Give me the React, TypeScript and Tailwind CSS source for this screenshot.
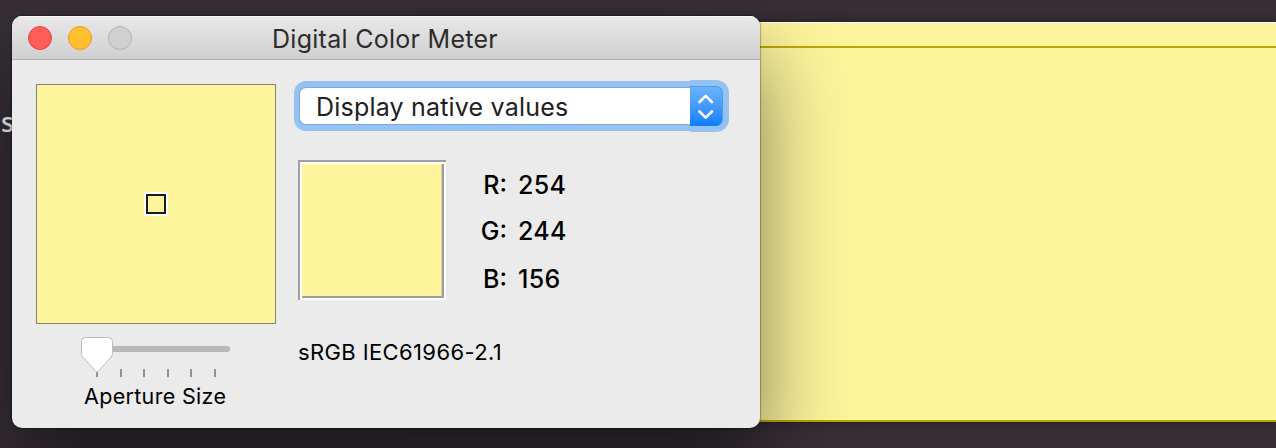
const channels = [
  { label: "R:", value: "254", row: "h-[46px]" },
  { label: "G:", value: "244", row: "h-[48px]" },
  { label: "B:", value: "156", row: "h-[46px]" },
];

function TitleBar() {
  return (
    <header className="flex h-11 shrink-0 items-center border-b border-[#b1b1b1] bg-linear-to-b from-[#e9e9e9] to-[#cfcfcf] pl-4 shadow-[inset_0_1px_0_#f6f6f6]">
      <div className="flex w-[244px] gap-4">
        <span className="size-6 rounded-full border border-[#e2463f] bg-[#ff5f58]" />
        <span className="size-6 rounded-full border border-[#dfa023] bg-[#ffbf2e]" />
        <span className="size-6 rounded-full border border-[#b4b4b4] bg-[#d0d0d0]" />
      </div>
      <h1 className="whitespace-nowrap pt-[3px] text-[25px] leading-8 font-[440] tracking-[0.28px] text-[#2c2c2c]">Digital Color Meter</h1>
    </header>
  );
}

function ApertureSlider() {
  return (
    <svg className="mt-2.5 ml-10 block" width="160" height="46" viewBox="0 0 160 46">
      <rect x="8" y="12" width="146" height="6" rx="3" fill="#b8b8b8" />
      <path d="M21 35v8M45 35v8M68 35v8M92 35v8M115 35v8M139 35v8" stroke="#929292" strokeWidth="2" />
      <path
        d="M9.500 3.500h23q4 0 4 4v12q0 2-1.400 3.600L22 37.600q-1 1-2 0L6.900 23.100q-1.400-1.600-1.400-3.600v-12q0-4 4-4Z"
        fill="#fff"
        stroke="#bcbcbc"
        strokeWidth="1"
      />
    </svg>
  );
}

function ModeSelect() {
  return (
    <button className="flex h-[52px] w-[436px] items-center pl-px text-left">
      <span className="flex h-[50px] flex-1 items-center rounded-l-[12px] bg-[#94c2f3] py-[6px] pl-[5px]">
        <span className="flex h-[38px] flex-1 items-center whitespace-nowrap rounded-l-[7px] border-y border-l border-[#78a9e3] bg-white pt-px pl-[16px] text-[25px] leading-8 font-[440] tracking-[0.2px] text-[#202020]">
          Display native values
        </span>
      </span>
      <span className="h-[52px] rounded-r-[13px] bg-[#94c2f3] py-[6px] pr-[6px]">
        <span className="flex h-10 w-[33px] items-center justify-center rounded-r-[7px] border-t border-r border-[#4b9bf1] bg-linear-to-b from-[#6bb3fa] to-[#077dff]">
          <svg width="18" height="26" viewBox="0 0 18 26" fill="none" stroke="#fff" strokeWidth="2.600" strokeLinecap="round" strokeLinejoin="round">
            <path d="M2.500 8l6.200-6.200 6.200 6.200M2.500 17.500l6.200 6.200 6.200-6.200" />
          </svg>
        </span>
      </span>
    </button>
  );
}

function Swatch() {
  return (
    <div className="h-[140px] w-[148px] bg-[#9f9f9f] pt-0.5 pl-0.5">
      <div className="h-full bg-white p-0.5">
        <div className="h-full bg-[#9f9f9f] pr-0.5 pb-0.5">
          <div className="h-full border-r border-[#d8d398] bg-[#fdf49c]" />
        </div>
      </div>
    </div>
  );
}

export default function App() {
  return (
    <main className="relative h-[448px] w-[1276px] overflow-hidden bg-[#372f36] font-['Inter',sans-serif]">
      <section className="flex h-full pt-[22px]">
        <div className="w-[400px] pt-[84px] pl-px text-[27px] leading-8 font-medium text-white font-['Noto_Sans',sans-serif]">s</div>
        <div className="h-[400px] flex-1 border-t border-b-2 border-t-white border-b-[#b8a600] bg-[#fdf49c] pt-[23px] shadow-[0_0_10px_rgba(0,0,0,0.4)]">
          <div className="h-0.5 bg-[#bda900]" />
        </div>
      </section>

      <div className="absolute top-4 left-3 flex h-[412px] w-[748px] flex-col overflow-hidden rounded-[10px] bg-[#ebebeb] shadow-[0_0_1px_1px_rgba(0,0,0,0.28),0_40px_85px_0_rgba(0,0,0,0.5)]">
        <TitleBar />
        <div className="flex flex-1 pt-5 pl-6">
          <div className="w-[257px] pt-1">
            <div className="flex size-60 items-center justify-center border border-[#85836b] bg-[#fdf49c]">
              <div className="size-6 border-2 border-white">
                <div className="size-full border-2 border-[#1c1a18]" />
              </div>
            </div>
            <ApertureSlider />
            <p className="mt-0.5 ml-[48px] whitespace-nowrap text-[21.500px] leading-7 font-[440] tracking-[0.32px] text-black">Aperture Size</p>
          </div>
          <div>
            <ModeSelect />
            <div className="mt-7 ml-[5px] flex">
              <Swatch />
              <dl className="ml-[29px] pt-0.5 text-[25px] leading-[46px] font-[450] text-black">
                {channels.map((channel) => (
                  <div key={channel.label} className={`flex ${channel.row}`}>
                    <dt className="w-8 text-right">{channel.label}</dt>
                    <dd className="ml-[11px] tracking-[0.3px]">{channel.value}</dd>
                  </div>
                ))}
              </dl>
            </div>
            <p className="mt-[36px] ml-[5px] whitespace-nowrap text-[22px] leading-7 font-[440] tracking-[0.38px] text-black">sRGB IEC61966-2.1</p>
          </div>
        </div>
      </div>
    </main>
  );
}
